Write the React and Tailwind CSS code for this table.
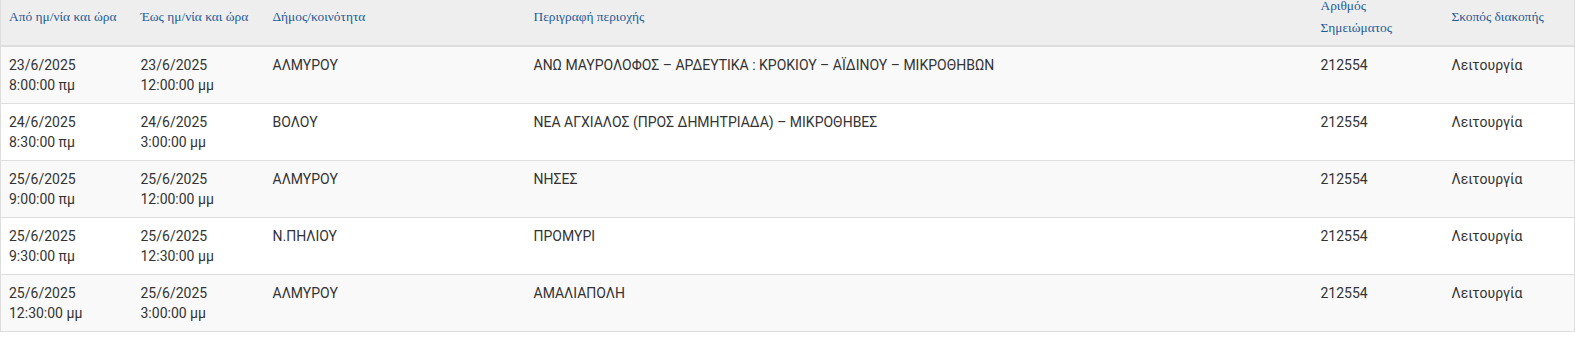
const rows = [
  {
    from: ['23/6/2025', '8:00:00 πμ'],
    to: ['23/6/2025', '12:00:00 μμ'],
    municipality: 'ΑΛΜΥΡΟΥ',
    area: 'ΑΝΩ ΜΑΥΡΟΛΟΦΟΣ – ΑΡΔΕΥΤΙΚΑ : ΚΡΟΚΙΟΥ – ΑΪΔΙΝΟΥ – ΜΙΚΡΟΘΗΒΩΝ',
    note: '212554',
    reason: 'Λειτουργία',
  },
  {
    from: ['24/6/2025', '8:30:00 πμ'],
    to: ['24/6/2025', '3:00:00 μμ'],
    municipality: 'ΒΟΛΟΥ',
    area: 'ΝΕΑ ΑΓΧΙΑΛΟΣ (ΠΡΟΣ ΔΗΜΗΤΡΙΑΔΑ) – ΜΙΚΡΟΘΗΒΕΣ',
    note: '212554',
    reason: 'Λειτουργία',
  },
  {
    from: ['25/6/2025', '9:00:00 πμ'],
    to: ['25/6/2025', '12:00:00 μμ'],
    municipality: 'ΑΛΜΥΡΟΥ',
    area: 'ΝΗΣΕΣ',
    note: '212554',
    reason: 'Λειτουργία',
  },
  {
    from: ['25/6/2025', '9:30:00 πμ'],
    to: ['25/6/2025', '12:30:00 μμ'],
    municipality: 'Ν.ΠΗΛΙΟΥ',
    area: 'ΠΡΟΜΥΡΙ',
    note: '212554',
    reason: 'Λειτουργία',
  },
  {
    from: ['25/6/2025', '12:30:00 μμ'],
    to: ['25/6/2025', '3:00:00 μμ'],
    municipality: 'ΑΛΜΥΡΟΥ',
    area: 'ΑΜΑΛΙΑΠΟΛΗ',
    note: '212554',
    reason: 'Λειτουργία',
  },
]

const headers = [
  { label: 'Από ημ/νία και ώρα', w: 'w-[132px]' },
  { label: 'Έως ημ/νία και ώρα', w: 'w-[132px]' },
  { label: 'Δήμος/κοινότητα', w: 'w-[261px]' },
  { label: 'Περιγραφή περιοχής', w: 'w-[787px]' },
  { label: 'Αριθμός Σημειώματος', w: 'w-[131px]' },
  { label: 'Σκοπός διακοπής', w: 'w-[131px]' },
]

export default function App() {
  return (
    <div className="w-[1575px] h-[358px] overflow-hidden bg-white">
      <table className="-mt-[14px] w-[1574px] table-fixed border-collapse border border-[#dddddd] font-['Roboto',sans-serif] text-[14px] text-[#333333]">
        <thead>
          <tr className="bg-[#eeeeee]">
            {headers.map((h) => (
              <th
                key={h.label}
                className={`${h.w} border-b-2 border-[#dddddd] px-2 pt-2 pb-[6px] text-left align-middle font-['Liberation_Serif',serif] text-[13.4px] font-normal leading-[22px] text-[#1e5b98]`}
              >
                {h.label}
              </th>
            ))}
          </tr>
        </thead>
        <tbody>
          {rows.map((r, i) => (
            <tr key={i} className={`border-t border-[#dddddd] ${i % 2 === 0 ? 'bg-[#f9f9f9]' : 'bg-white'}`}>
              <td className="p-2 align-top leading-5">
                {r.from[0]}
                <br />
                {r.from[1]}
              </td>
              <td className="p-2 align-top leading-5">
                {r.to[0]}
                <br />
                {r.to[1]}
              </td>
              <td className="p-2 align-top leading-5">{r.municipality}</td>
              <td className="p-2 align-top leading-5">{r.area}</td>
              <td className="p-2 align-top leading-5">{r.note}</td>
              <td className="p-2 align-top leading-5">{r.reason}</td>
            </tr>
          ))}
        </tbody>
      </table>
    </div>
  )
}
